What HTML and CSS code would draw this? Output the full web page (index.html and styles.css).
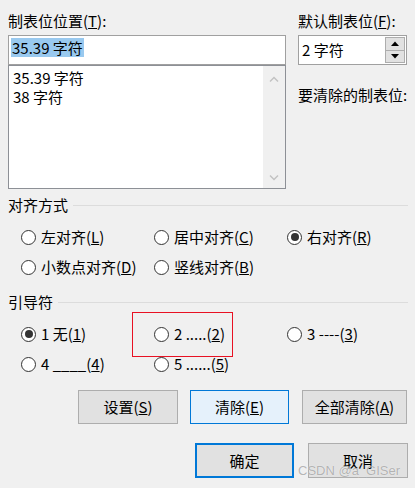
FILE: index.html
```html
<!DOCTYPE html>
<html lang="zh-CN">
<head>
<meta charset="utf-8">
<title>制表位</title>
<link rel="stylesheet" href="styles.css">
</head>
<body>
<div class="dialog">
  <div class="top">
    <div class="col-left">
      <div class="lbl">制表位位置(<u>T</u>):</div>
      <div class="input"><span class="sel">35.39 字符</span></div>
      <div class="listbox">
        <div class="items">
          <div class="item">35.39 字符</div>
          <div class="item">38 字符</div>
        </div>
        <div class="vscroll">
          <svg class="chev" width="10" height="6" viewBox="0 0 10 6"><path d="M1 5.5 L5 1.5 L9 5.5" fill="none" stroke="#c2c2c2" stroke-width="1.4"/></svg>
          <svg class="chev" width="10" height="6" viewBox="0 0 10 6"><path d="M1 0.5 L5 4.5 L9 0.5" fill="none" stroke="#c2c2c2" stroke-width="1.4"/></svg>
        </div>
      </div>
    </div>
    <div class="col-right">
      <div class="lbl">默认制表位(<u>F</u>):</div>
      <div class="spin">
        <span class="spin-val">2 字符</span>
        <div class="spin-btns">
          <div class="spin-btn"><svg width="8" height="5" viewBox="0 0 8 5"><path d="M0 5 L4 0.5 L8 5 Z" fill="#000"/></svg></div>
          <div class="spin-btn"><svg width="8" height="5" viewBox="0 0 8 5"><path d="M0 0 L4 4.5 L8 0 Z" fill="#000"/></svg></div>
        </div>
      </div>
      <div class="lbl lbl-clear">要清除的制表位:</div>
    </div>
  </div>

  <div class="group-head group-align"><span>对齐方式</span><span class="rule"></span></div>
  <div class="radios">
    <div class="radio"><span class="circle"></span><span>左对齐(<u>L</u>)</span></div>
    <div class="radio"><span class="circle"></span><span>居中对齐(<u>C</u>)</span></div>
    <div class="radio"><span class="circle on"></span><span>右对齐(<u>R</u>)</span></div>
    <div class="radio"><span class="circle"></span><span>小数点对齐(<u>D</u>)</span></div>
    <div class="radio"><span class="circle"></span><span>竖线对齐(<u>B</u>)</span></div>
  </div>

  <div class="group-head group-leader"><span>引导符</span><span class="rule"></span></div>
  <div class="radios">
    <div class="radio"><span class="circle on"></span><span>1 无(<u>1</u>)</span></div>
    <div class="radio"><span class="circle"></span><span>2 .....(<u>2</u>)</span></div>
    <div class="radio"><span class="circle"></span><span>3 ----(<u>3</u>)</span></div>
    <div class="radio"><span class="circle"></span><span>4 ____(<u>4</u>)</span></div>
    <div class="radio"><span class="circle"></span><span>5 ......(<u>5</u>)</span></div>
  </div>

  <div class="btn-row row1">
    <div class="btn w100">设置(<u>S</u>)</div>
    <div class="btn btn-hover w99">清除(<u>E</u>)</div>
    <div class="btn w105">全部清除(<u>A</u>)</div>
  </div>
  <div class="btn-row row2">
    <div class="btn btn-default w99">确定</div>
    <div class="btn w100">取消</div>
  </div>

  <div class="highlight-box"></div>
  <div class="watermark">CSDN @a_GISer</div>
</div>
</body>
</html>
```

FILE: styles.css
```css
* { box-sizing: border-box; }
html, body {
  margin: 0;
  padding: 0;
  background: #f0f0f0;
}
.dialog {
  position: relative;
  width: 415px;
  height: 488px;
  padding: 11px 7px 0 8px;
  font-family: "Noto Sans CJK SC", "Microsoft YaHei", sans-serif;
  font-size: 15px;
  line-height: 20px;
  color: #000;
  overflow: hidden;
}
u { text-decoration: underline; text-underline-offset: 1px; text-decoration-thickness: 1px; }

.top {
  display: grid;
  grid-template-columns: 278px 109px;
  column-gap: 12px;
}
.lbl { height: 20px; white-space: nowrap; }
.input {
  margin-top: 4px;
  height: 30px;
  border: 1px solid #a0a0a0;
  background: #fff;
  padding: 2px 0 0 2px;
}
.sel {
  display: inline-block;
  background: #99c9ef;
  height: 19px;
  line-height: 19px;
  padding: 0 1px;
}
.listbox {
  height: 124px;
  border: 1px solid #8d9096;
  background: #fff;
  display: flex;
}
.items {
  flex: 1;
  padding: 2px 0 0 4px;
}
.item { height: 19px; line-height: 20px; }
.vscroll {
  width: 22px;
  background: #f0f0f0;
  display: flex;
  flex-direction: column;
  justify-content: space-between;
  align-items: center;
  padding: 10px 0 7px;
}
.chev { display: block; }

.spin {
  margin-top: 4px;
  height: 30px;
  border: 1px solid #a0a0a0;
  background: #fff;
  display: flex;
  align-items: stretch;
  padding: 1px 1px 1px 3px;
}
.spin-val { flex: 1; line-height: 26px; }
.spin-btns {
  width: 20px;
  display: flex;
  flex-direction: column;
}
.spin-btn {
  flex: 1;
  background: #e1e1e1;
  border: 1px solid #adadad;
  display: flex;
  align-items: center;
  justify-content: center;
}
.spin-btn + .spin-btn { border-top: none; }
.spin-btn svg { display: block; }
.lbl-clear { margin-top: 20px; }

.group-head {
  display: flex;
  align-items: center;
  height: 20px;
  white-space: nowrap;
}
.group-align { margin-top: 6px; }
.group-leader { margin-top: 15px; }
.rule {
  flex: 1;
  height: 1px;
  background: #dcdcdc;
  margin-left: 5px;
}
.radios {
  margin-top: 12px;
  padding-left: 13px;
  display: grid;
  grid-template-columns: 133px 133px 120px;
  row-gap: 10px;
}
.radio {
  display: flex;
  align-items: center;
  height: 20px;
  white-space: nowrap;
}
.circle {
  width: 15px;
  height: 15px;
  border: 1px solid #333;
  border-radius: 50%;
  background: #fff;
  margin-right: 5px;
  display: flex;
  align-items: center;
  justify-content: center;
  flex: none;
}
.circle.on::after {
  content: "";
  width: 8px;
  height: 8px;
  border-radius: 50%;
  background: #333;
}

.btn-row { display: flex; }
.row1 { margin-top: 16px; padding-left: 70px; gap: 13px; }
.row1 .btn:first-child { margin-right: -1px; }
.row2 { margin-top: 19px; padding-left: 187px; gap: 14px; }
.btn {
  height: 34px;
  background: #e1e1e1;
  border: 1px solid #adadad;
  display: flex;
  align-items: center;
  justify-content: center;
  white-space: nowrap;
}
.row2 .btn { height: 35px; }
.btn-hover { background: #e5f1fb; border-color: #0078d7; }
.btn-default { border: 2px solid #0078d7; }
.w99 { width: 99px; }
.w100 { width: 100px; }
.w105 { width: 105px; }

.highlight-box {
  position: absolute;
  left: 132px;
  top: 312px;
  width: 101px;
  height: 45px;
  border: 1px solid #e81123;
}
.watermark {
  position: absolute;
  left: 298px;
  top: 463px;
  font-family: "Liberation Sans", Arial, sans-serif;
  font-size: 13px;
  line-height: 16px;
  color: rgba(120, 120, 120, 0.55);
  text-shadow: 0 0 1px rgba(255, 255, 255, 0.9);
  white-space: nowrap;
}
```
